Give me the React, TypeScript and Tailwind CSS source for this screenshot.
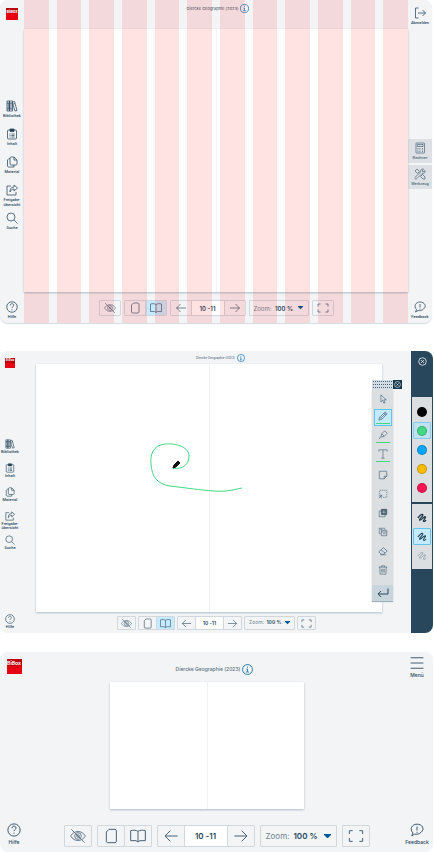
import type { ReactNode } from "react";
import clsx from "clsx";

type Size = "sm" | "md" | "lg";

const ICON_SIZE = { sm: "size-[10px]", md: "size-3", lg: "size-[14px]" };
const LABEL_SIZE = {
  sm: "font-['Roboto',sans-serif] text-[4px] leading-[4px]",
  md: "font-['Roboto',sans-serif] text-[4px] leading-[5px]",
  lg: "text-[5px] leading-[8px]",
};
const TITLE_SIZE = {
  sm: "text-[3px] leading-[4px]",
  md: "text-[4px] leading-[5px]",
  lg: "text-[5px] leading-[8px]",
};

const ICONS: Record<string, ReactNode> = {
  books: (
    <>
      <path d="M2 2h5v20H2zM7 2h6v20H7zM2 6h11M2 18h11M4.500 6v12M10 6v12" />
      <path d="M13 4l4-1 5 18-4 1-5-16M15 8l3-1" />
    </>
  ),
  content: (
    <>
      <rect x="3" y="4" width="18" height="18" rx="2" />
      <path d="M8 2h8v5H8z" fill="currentColor" />
      <path d="M7 12h2M11 12h6M7 15h2M11 15h6M7 18h2M11 18h6" />
    </>
  ),
  material: (
    <>
      <path d="M10 2h6l6 6v8c0 1-1 2-2 2H10c-1 0-2-1-2-2V4c0-1 1-2 2-2zM16 2v6h6" />
      <path d="M8 5H6L3 8v12c0 1 1 2 2 2h11v-4" />
    </>
  ),
  share: (
    <>
      <path d="M10 4H2v18h18v-6" />
      <path d="M16 2l7 6-7 6v-4c-4 0-6 2-8 6 0-6 2-10 8-10z" />
    </>
  ),
  search: (
    <>
      <circle cx="10" cy="10" r="8" />
      <path d="M16 16l7 7" />
    </>
  ),
  help: (
    <>
      <circle cx="12" cy="12" r="10.500" />
      <path d="M8.500 9c0-5 7-4.500 7-.5 0 3-3.500 2.500-3.500 5.500M12 16.500v2" />
    </>
  ),
  feedback: (
    <>
      <path d="M3 22l2-5C-1 11 3 2 12 2s14 8 7 14c-3 3-8 4-11 3z" />
      <path d="M12 6v7M12 15v2" />
    </>
  ),
  logout: <path d="M9 2H3v20h6M8 12h15M17 6l6 6-6 6" />,
  calculator: (
    <>
      <rect x="4" y="2" width="17" height="20" rx="1" />
      <path d="M7 5h11v4H7zM7 13h2M11 13h2M16 13h2M7 16h2M11 16h2M16 16h2M7 19h2M11 19h2M16 19h2" />
    </>
  ),
  tools: (
    <>
      <path d="M2 6l4-4 5 5-4 4zM13 17l4-4 5 5v4h-4z" />
      <path d="M3 18l10-10c-1-4 3-7 6-6l-3 4 2 2 4-3c1 4-2 7-6 6L6 21c-3 3-6-1-3-3z" />
    </>
  ),
  menu: <path d="M1 3h22M1 12h22M1 21h22" />,
  eye: (
    <>
      <path d="M1 12c5-9 17-9 22 0-5 9-17 9-22 0z" />
      <circle cx="12" cy="12" r="5" />
      <circle cx="12" cy="12" r="2" />
      <path d="M2 2l20 20" />
    </>
  ),
  page: <path d="M9 2h9c1 0 2 1 2 2v16c0 1-1 2-2 2H7c-1 0-2-1-2-2V6z" />,
  book: <path d="M12 5v16M12 5C9 3 5 3 1 4v15h8l3 2 3-2h8V4c-4-1-8-1-11 1z" />,
  left: <path d="M22 12H3M11 4l-8 8 8 8" />,
  right: <path d="M2 12h19M13 4l8 8-8 8" />,
  fullscreen: <path d="M7 4H2v5M17 4h5v5M7 20H2v-5M17 20h5v-5" />,
  pointer: <path d="M7 2v17l4-4 3 7 3-1-3-7h6z" />,
  pencil: <path d="M2 22l2-7L17 2l5 5L9 20zM4 15l5 5M7 17L19 5M14 5l5 5" />,
  marker: <path d="M2 22l5-6M7 16l2-7 7-7 6 6-7 7-7 2zM9 9l6 6" />,
  text: <path d="M2 6V2h20v4M12 2v20M8 22h8" />,
  note: <path d="M4 3h16c1 0 1 0 1 1v11l-6 6H4c-1 0-1 0-1-1V4c0-1 0-1 1-1zM21 15h-6v6" />,
  marquee: (
    <>
      <path d="M4 12V3h17v17h-9" strokeDasharray="3 2" />
      <path d="M2 22l7-7M4 15h5v5M2 15l7 7" />
    </>
  ),
  layers: (
    <>
      <path d="M7 7H3v14h14v-4" />
      <path d="M8 3h13v13H8z" fill="currentColor" />
      <path d="M14 6v7M11 10h7" stroke="#dcdfe2" />
    </>
  ),
  copy: <path d="M6 16H3V3h13v3M8 8h13v13H8zM8 12h13M12 16h6M6 6h4" />,
  eraser: <path d="M2 14L13 4l9 8-9 8H8zM7 9l10 8M5 21h15" />,
  trash: <path d="M2 5h20M8 5V2h8v3M4 5l1 17h14l1-17M9 9v9M12 9v9M15 9v9" />,
  enter: <path d="M22 3v11H2M8 8l-6 6 6 6" />,
  scribble: <path d="M2 12C6 7 12 1 14 4c2 4-10 10-8 13 3 3 11-10 14-8s-7 8-4 11c2 1 4-1 6-3" />,
};

type IconProps = { name: string; weight?: number; className?: string };

function Icon({ name, weight = 1.5, className }: IconProps) {
  return (
    <svg
      viewBox="0 0 24 24"
      fill="none"
      stroke="currentColor"
      strokeWidth={weight}
      strokeLinejoin="round"
      className={clsx("shrink-0", className)}
      aria-hidden="true"
    >
      {ICONS[name]}
    </svg>
  );
}

function Logo({ size }: { size: Size }) {
  return (
    <a
      href="#"
      className={clsx(
        "flex shrink-0 justify-center bg-linear-to-b from-[#b8000d] from-45% to-[#e60012] to-45% font-bold text-white",
        size === "sm" && "size-[10px] text-[3px] leading-[5px]",
        size === "md" && "size-3 text-[4px] leading-[7px]",
        size === "lg" && "size-[15px] text-[5px] leading-[8px]"
      )}
    >
      BiBox
    </a>
  );
}

type RailItemProps = { icon: string; label: string; size: Size; className?: string };

function RailItem({ icon, label, size, className }: RailItemProps) {
  return (
    <button className={clsx("flex w-full shrink-0 flex-col items-center gap-px text-center", className)}>
      <Icon name={icon} className={ICON_SIZE[size]} />
      <span className={clsx("whitespace-pre-line font-medium", LABEL_SIZE[size])}>{label}</span>
    </button>
  );
}

const NAV = [
  { icon: "books", label: "Bibliothek" },
  { icon: "content", label: "Inhalt" },
  { icon: "material", label: "Material" },
  { icon: "share", label: "Freigabe-\nübersicht" },
  { icon: "search", label: "Suche" },
];

function MainNav({ size, className }: { size: Size; className: string }) {
  return (
    <nav className={className}>
      {NAV.map((item) => (
        <RailItem key={item.icon} {...item} size={size} className={size === "sm" ? "h-6" : "h-7"} />
      ))}
    </nav>
  );
}

function Title({ size, className }: { size: Size; className: string }) {
  return (
    <header className={clsx("flex shrink-0 items-center justify-center gap-0.5 text-[#5b7080]", className)}>
      <h2 className={clsx("font-medium", TITLE_SIZE[size])}>Diercke Geographie (2023)</h2>
      <button aria-label="Info" className="text-[#1472b0]">
        <svg
          viewBox="0 0 12 12"
          fill="none"
          stroke="currentColor"
          className={clsx(size === "sm" ? "size-2" : size === "md" ? "size-[9px]" : "size-[11px]")}
        >
          <circle cx="6" cy="6" r="5.400" />
          <path d="M6 2.800v1.200M4.800 5.500H6v3M4.500 8.700h3" />
        </svg>
      </button>
    </header>
  );
}

const BAR = {
  sm: { btn: "h-[14px] w-[19px]", input: "h-[14px] w-[29px] text-[5px]", zoom: "h-[14px] w-[51px] text-[5px] px-1", select: "w-4", gap: "gap-0.5", icon: "size-[11px]" },
  md: { btn: "h-4 w-[22px]", input: "h-4 w-[34px] text-[6px]", zoom: "h-4 w-[60px] text-[6px] px-1", select: "w-5", gap: "gap-[3px]", icon: "size-3" },
  lg: { btn: "h-[22px] w-7", input: "h-[22px] w-11 text-[8px]", zoom: "h-[22px] w-[77px] text-[8px] px-[5px]", select: "w-[26px]", gap: "gap-[5px]", icon: "size-4" },
};

function Toolbar({ size, spread, className }: { size: Size; spread?: boolean; className: string }) {
  const s = BAR[size];
  const btn = clsx("flex shrink-0 items-center justify-center border border-[#d0d8dd] text-[#486273]", s.btn);

  return (
    <div className={clsx("flex shrink-0 justify-center", s.gap, className)}>
      <button aria-label="Ausblenden" className={clsx(btn, "rounded-[1px]")}>
        <Icon name="eye" weight={1.2} className={s.icon} />
      </button>
      <div className="flex">
        <button aria-label="Einzelseite" className={clsx(btn, "rounded-l-[1px]")}>
          <Icon name="page" className={s.icon} />
        </button>
        <button
          aria-label="Doppelseite"
          className={clsx(btn, "-ml-px rounded-r-[1px]", spread && "border-[#6bc7f2] bg-[#c5eafd] text-[#1f6c9d]")}
        >
          <Icon name="book" className={s.icon} />
        </button>
      </div>
      <div className="flex">
        <button aria-label="Zurück" className={clsx(btn, "rounded-l-[1px]")}>
          <Icon name="left" className={s.icon} />
        </button>
        <input
          aria-label="Seite"
          defaultValue="10 -11"
          className={clsx("-ml-px border border-[#d0d8dd] bg-white p-0 text-center font-semibold", s.input)}
        />
        <button aria-label="Weiter" className={clsx(btn, "-ml-px rounded-r-[1px]")}>
          <Icon name="right" className={s.icon} />
        </button>
      </div>
      <label className={clsx("flex shrink-0 items-center justify-between rounded-[1px] border border-[#d0d8dd]", s.zoom)}>
        <span className="text-[#708491]">Zoom:</span>
        <select className={clsx("appearance-none bg-transparent p-0 font-semibold", s.select)}>
          <option>100 %</option>
        </select>
        <svg viewBox="0 0 8 5" className={clsx("pointer-events-none text-[#00599c]", size === "lg" ? "w-[7px]" : "w-[5px]")}>
          <path d="M0 0h8v1L4 5 0 1z" fill="currentColor" />
        </svg>
      </label>
      <button aria-label="Vollbild" className={clsx(btn, "rounded-[1px]")}>
        <Icon name="fullscreen" className={s.icon} />
      </button>
    </div>
  );
}

function Spread({ className, children }: { className: string; children?: ReactNode }) {
  return (
    <div className={clsx("relative flex bg-white shadow-[0_1px_2px_#aebdc6]", className)}>
      <div className="flex-1 border-r border-[#f0f2f4]" />
      <div className="flex-1" />
      {children}
    </div>
  );
}

const TOOLS = [
  { icon: "pointer" },
  { icon: "pencil", active: true, ink: true },
  { icon: "marker", ink: true },
  { icon: "text", ink: true },
  { icon: "note" },
  { icon: "marquee" },
  { icon: "layers" },
  { icon: "copy" },
  { icon: "eraser" },
  { icon: "trash" },
];

function CloseIcon({ className }: { className: string }) {
  return (
    <svg viewBox="0 0 12 12" fill="none" stroke="currentColor" className={className}>
      <circle cx="6" cy="6" r="5" />
      <path d="M4 4l4 4M8 4l-4 4" />
    </svg>
  );
}

function ToolPalette() {
  return (
    <div className="absolute -right-5 top-4 w-[30px]">
      <div className="flex h-[9px]">
        {/* drag handle */}
        <svg viewBox="0 0 21 9" stroke="#4d6472" strokeDasharray="1 1" className="w-[21px] shrink-0 bg-[#d3dce2]">
          <path d="M1 1.500h19M1 4.500h19M1 7.500h19" />
        </svg>
        <button aria-label="Schließen" className="flex flex-1 items-center justify-center bg-[#17384e] text-white">
          <CloseIcon className="size-[7px]" />
        </button>
      </div>
      <div className="flex w-[21px] flex-col items-center bg-[#dcdfe2] shadow-[0_1px_1px_#9fb0bb]">
        {TOOLS.map((tool) => (
          <button
            key={tool.icon}
            aria-label={tool.icon}
            className={clsx(
              "my-px flex h-[17px] w-[18px] flex-col items-center justify-center gap-0.5 border text-[#425d6e]",
              tool.active ? "border-[#63c4f2] bg-[#c5eafd] text-[#1e5a80]" : "border-transparent"
            )}
          >
            <Icon name={tool.icon} className="size-[10px]" />
            {tool.ink && <span className="h-px w-[14px] shrink-0 bg-[#43d982]" />}
          </button>
        ))}
        <button aria-label="enter" className="mt-[6px] flex h-4 w-full items-center justify-center bg-[#c8d5dd]">
          <Icon name="enter" weight={2} className="size-3" />
        </button>
      </div>
    </div>
  );
}

const COLORS = [
  { name: "Schwarz", dot: "bg-black" },
  { name: "Grün", dot: "bg-[#43d982]" },
  { name: "Blau", dot: "bg-[#00a6f7]" },
  { name: "Gelb", dot: "bg-[#fabb00]" },
  { name: "Rot", dot: "bg-[#ff1552]" },
];

const STROKES = [
  { name: "Dick", weight: 3, style: "text-[#17303f]" },
  { name: "Mittel", weight: 2.5, style: "border-[#63c4f2] bg-[#c5eafd] text-[#17384e]" },
  { name: "Dünn", weight: 2, style: "text-[#8d9aa3]" },
];

function InkPanel() {
  return (
    <aside className="flex w-[22px] shrink-0 flex-col items-center bg-[#28475c] text-white">
      <button aria-label="Schließen" className="mt-[6px]">
        <CloseIcon className="size-[9px]" />
      </button>
      <div className="mt-[31px] flex w-5 flex-col items-center gap-0.5 bg-[#dcdfe2] py-[6px]">
        {COLORS.map((color) => (
          <button
            key={color.name}
            aria-label={color.name}
            className={clsx(
              "flex h-[17px] w-[18px] items-center justify-center rounded-[1px] border",
              color.name === "Grün" ? "border-[#7fcdf2] bg-[#bfe1f2]" : "border-transparent"
            )}
          >
            <span className={clsx("size-[10px] rounded-full border border-black/20", color.dot)} />
          </button>
        ))}
      </div>
      <div className="mt-0.5 flex w-5 flex-col items-center gap-0.5 bg-[#dcdfe2] py-[5px]">
        {STROKES.map((stroke) => (
          <button
            key={stroke.name}
            aria-label={stroke.name}
            className={clsx("flex h-[17px] w-[18px] items-center justify-center rounded-[1px] border", stroke.name !== "Mittel" && "border-transparent", stroke.style)}
          >
            <Icon name="scribble" weight={stroke.weight} className="size-[10px]" />
          </button>
        ))}
      </div>
    </aside>
  );
}

function GridView() {
  return (
    <section className="mr-0.5 flex overflow-hidden rounded-lg bg-[#f2f4f6] shadow-[0_1px_1px_#d5dbdf]">
      <aside className="flex w-6 shrink-0 flex-col items-center pb-1 pt-2">
        <Logo size="md" />
        <MainNav size="md" className="mt-20" />
        <RailItem icon="help" label="Hilfe" size="md" className="mt-auto" />
      </aside>
      <main className="relative flex min-w-0 flex-1 flex-col">
        <Title size="md" className="h-[29px] pb-[13px] pl-1" />
        <Spread className="aspect-[384/263]" />
        <Toolbar size="md" spread className="pb-[7px] pt-2" />
        {/* column grid */}
        <div className="pointer-events-none absolute inset-0 grid grid-cols-12 gap-2">
          {Array.from({ length: 12 }, (_, i) => (
            <div key={i} className="bg-[#ff0000]/11" />
          ))}
        </div>
      </main>
      <aside className="flex w-6 shrink-0 flex-col items-center pb-1 pt-[7px]">
        <RailItem icon="logout" label="Abmelden" size="md" className="h-5" />
        <div className="mt-28 flex w-full flex-col gap-0.5 text-[#526b7b]">
          <RailItem icon="calculator" label="Rechner" size="md" className="h-6 bg-[#dde1e5] pt-[3px]" />
          <RailItem icon="tools" label="Werkzeug" size="md" className="h-6 bg-[#dde1e5] pt-[3px]" />
        </div>
        <RailItem icon="feedback" label="Feedback" size="md" className="mt-auto" />
      </aside>
    </section>
  );
}

function DrawView() {
  return (
    <section className="mr-px mt-7 flex overflow-hidden rounded-lg bg-[#f2f4f6]">
      <aside className="flex w-5 shrink-0 flex-col items-center pb-1 pt-[7px]">
        <Logo size="sm" />
        <MainNav size="sm" className="mt-[71px]" />
        <RailItem icon="help" label="Hilfe" size="sm" className="mt-auto" />
      </aside>
      <main className="flex min-w-0 flex-1 flex-col">
        <Title size="sm" className="h-[13px] pl-[10px]" />
        <Spread className="ml-4 mr-[29px] aspect-[346/248]">
          <svg viewBox="0 0 346 248" fill="none" className="absolute inset-0 size-full">
            <path
              d="M137 104c10 2 16-4 16-12 0-8-11-13-24-12-12 1-15 11-14 20 1 13 6 20 19 22 17 2 30 4 44 5 12 1 18-1 28-3"
              stroke="#43d982"
            />
            <path d="M137 104l1-3 4-4 2 2-4 4z" fill="#111" stroke="#111" />
          </svg>
          <ToolPalette />
        </Spread>
        <Toolbar size="sm" spread className="pb-[3px] pl-0.5 pt-1" />
      </main>
      <InkPanel />
    </section>
  );
}

function CompactView() {
  return (
    <section className="mr-px mt-[19px] flex overflow-hidden rounded-lg bg-[#f2f4f6]">
      <aside className="flex w-7 shrink-0 flex-col items-center pb-[6px] pt-[7px]">
        <Logo size="lg" />
        <RailItem icon="help" label="Hilfe" size="lg" className="mt-auto" />
      </aside>
      <main className="flex min-w-0 flex-1 flex-col">
        <Title size="lg" className="h-[30px] pt-1" />
        <Spread className="ml-[22%] mr-[26%] aspect-[194/127]" />
        <Toolbar size="lg" className="pb-[5px] pl-1 pt-4" />
      </main>
      <aside className="flex w-8 shrink-0 flex-col items-center pb-[6px] pt-1">
        <RailItem icon="menu" label="Menü" size="lg" />
        <RailItem icon="feedback" label="Feedback" size="lg" className="mt-auto" />
      </aside>
    </section>
  );
}

export default function App() {
  return (
    <div className="bg-white font-['Inter',sans-serif] text-[#28475c]">
      <GridView />
      <DrawView />
      <CompactView />
    </div>
  );
}
